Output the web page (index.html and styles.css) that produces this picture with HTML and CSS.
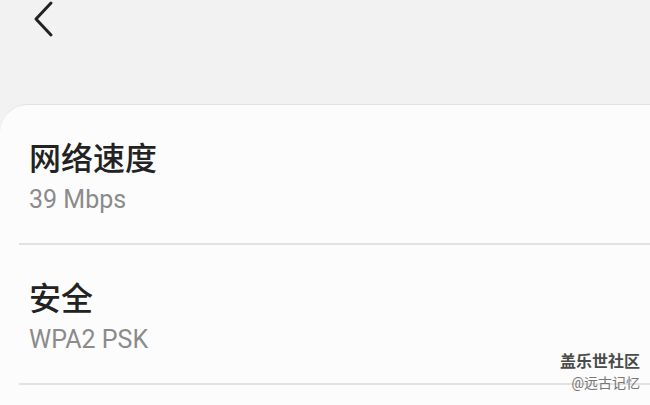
FILE: index.html
```html
<!DOCTYPE html>
<html lang="zh-CN">
<head>
    <meta charset="UTF-8">
    <title>网络详情</title>
    <meta name="viewport" content="width=device-width, initial-scale=1.0">
    <link rel="stylesheet" href="styles.css">
</head>
<body>
    <div class="topbar">
        <button class="back" aria-label="返回">
            <svg width="24" height="38" viewBox="0 0 24 38">
                <polyline points="19,3 4,19 19,35" fill="none" stroke="#222" stroke-width="3" stroke-linecap="round" stroke-linejoin="round"/>
            </svg>
        </button>
    </div>
    <div class="card">
        <div class="item">
            <div class="title">网络速度</div>
            <div class="value">39 Mbps</div>
        </div>
        <div class="item">
            <div class="title">安全</div>
            <div class="value">WPA2 PSK</div>
        </div>
    </div>
    <div class="mark">
        <div class="mark-name">盖乐世社区</div>
        <div class="mark-user">@远古记忆</div>
    </div>
</body>
</html>
```

FILE: styles.css
```css
body {
    margin: 0;
    height: 405px;
    overflow: hidden;
    background-color: #f2f2f2;
    font-family: Roboto, "Noto Sans CJK SC", sans-serif;
    position: relative;
}
.topbar {
    height: 104px;
}
.back {
    border: none;
    background: none;
    padding: 0;
    margin: 0 0 0 32px;
    display: block;
}
.card {
    background-color: #fcfcfc;
    border-top: 1px solid #e2e2e2;
    border-top-left-radius: 28px;
    height: 301px;
    box-sizing: border-box;
}
.item {
    margin-left: 19px;
    padding: 34px 0 27px 10px;
    border-bottom: 2px solid #e2e2e2;
}
.title {
    font-size: 32px;
    font-weight: 500;
    color: #222;
    line-height: 40px;
}
.value {
    font-size: 25px;
    color: #8b8b8b;
    line-height: 32px;
    margin-top: 5px;
}
.mark {
    position: absolute;
    right: 10px;
    top: 351px;
    text-align: right;
}
.mark-name {
    font-size: 16px;
    font-weight: bold;
    color: #4a4a4a;
    line-height: 22px;
}
.mark-user {
    font-size: 14px;
    color: #777;
    line-height: 20px;
}
```
